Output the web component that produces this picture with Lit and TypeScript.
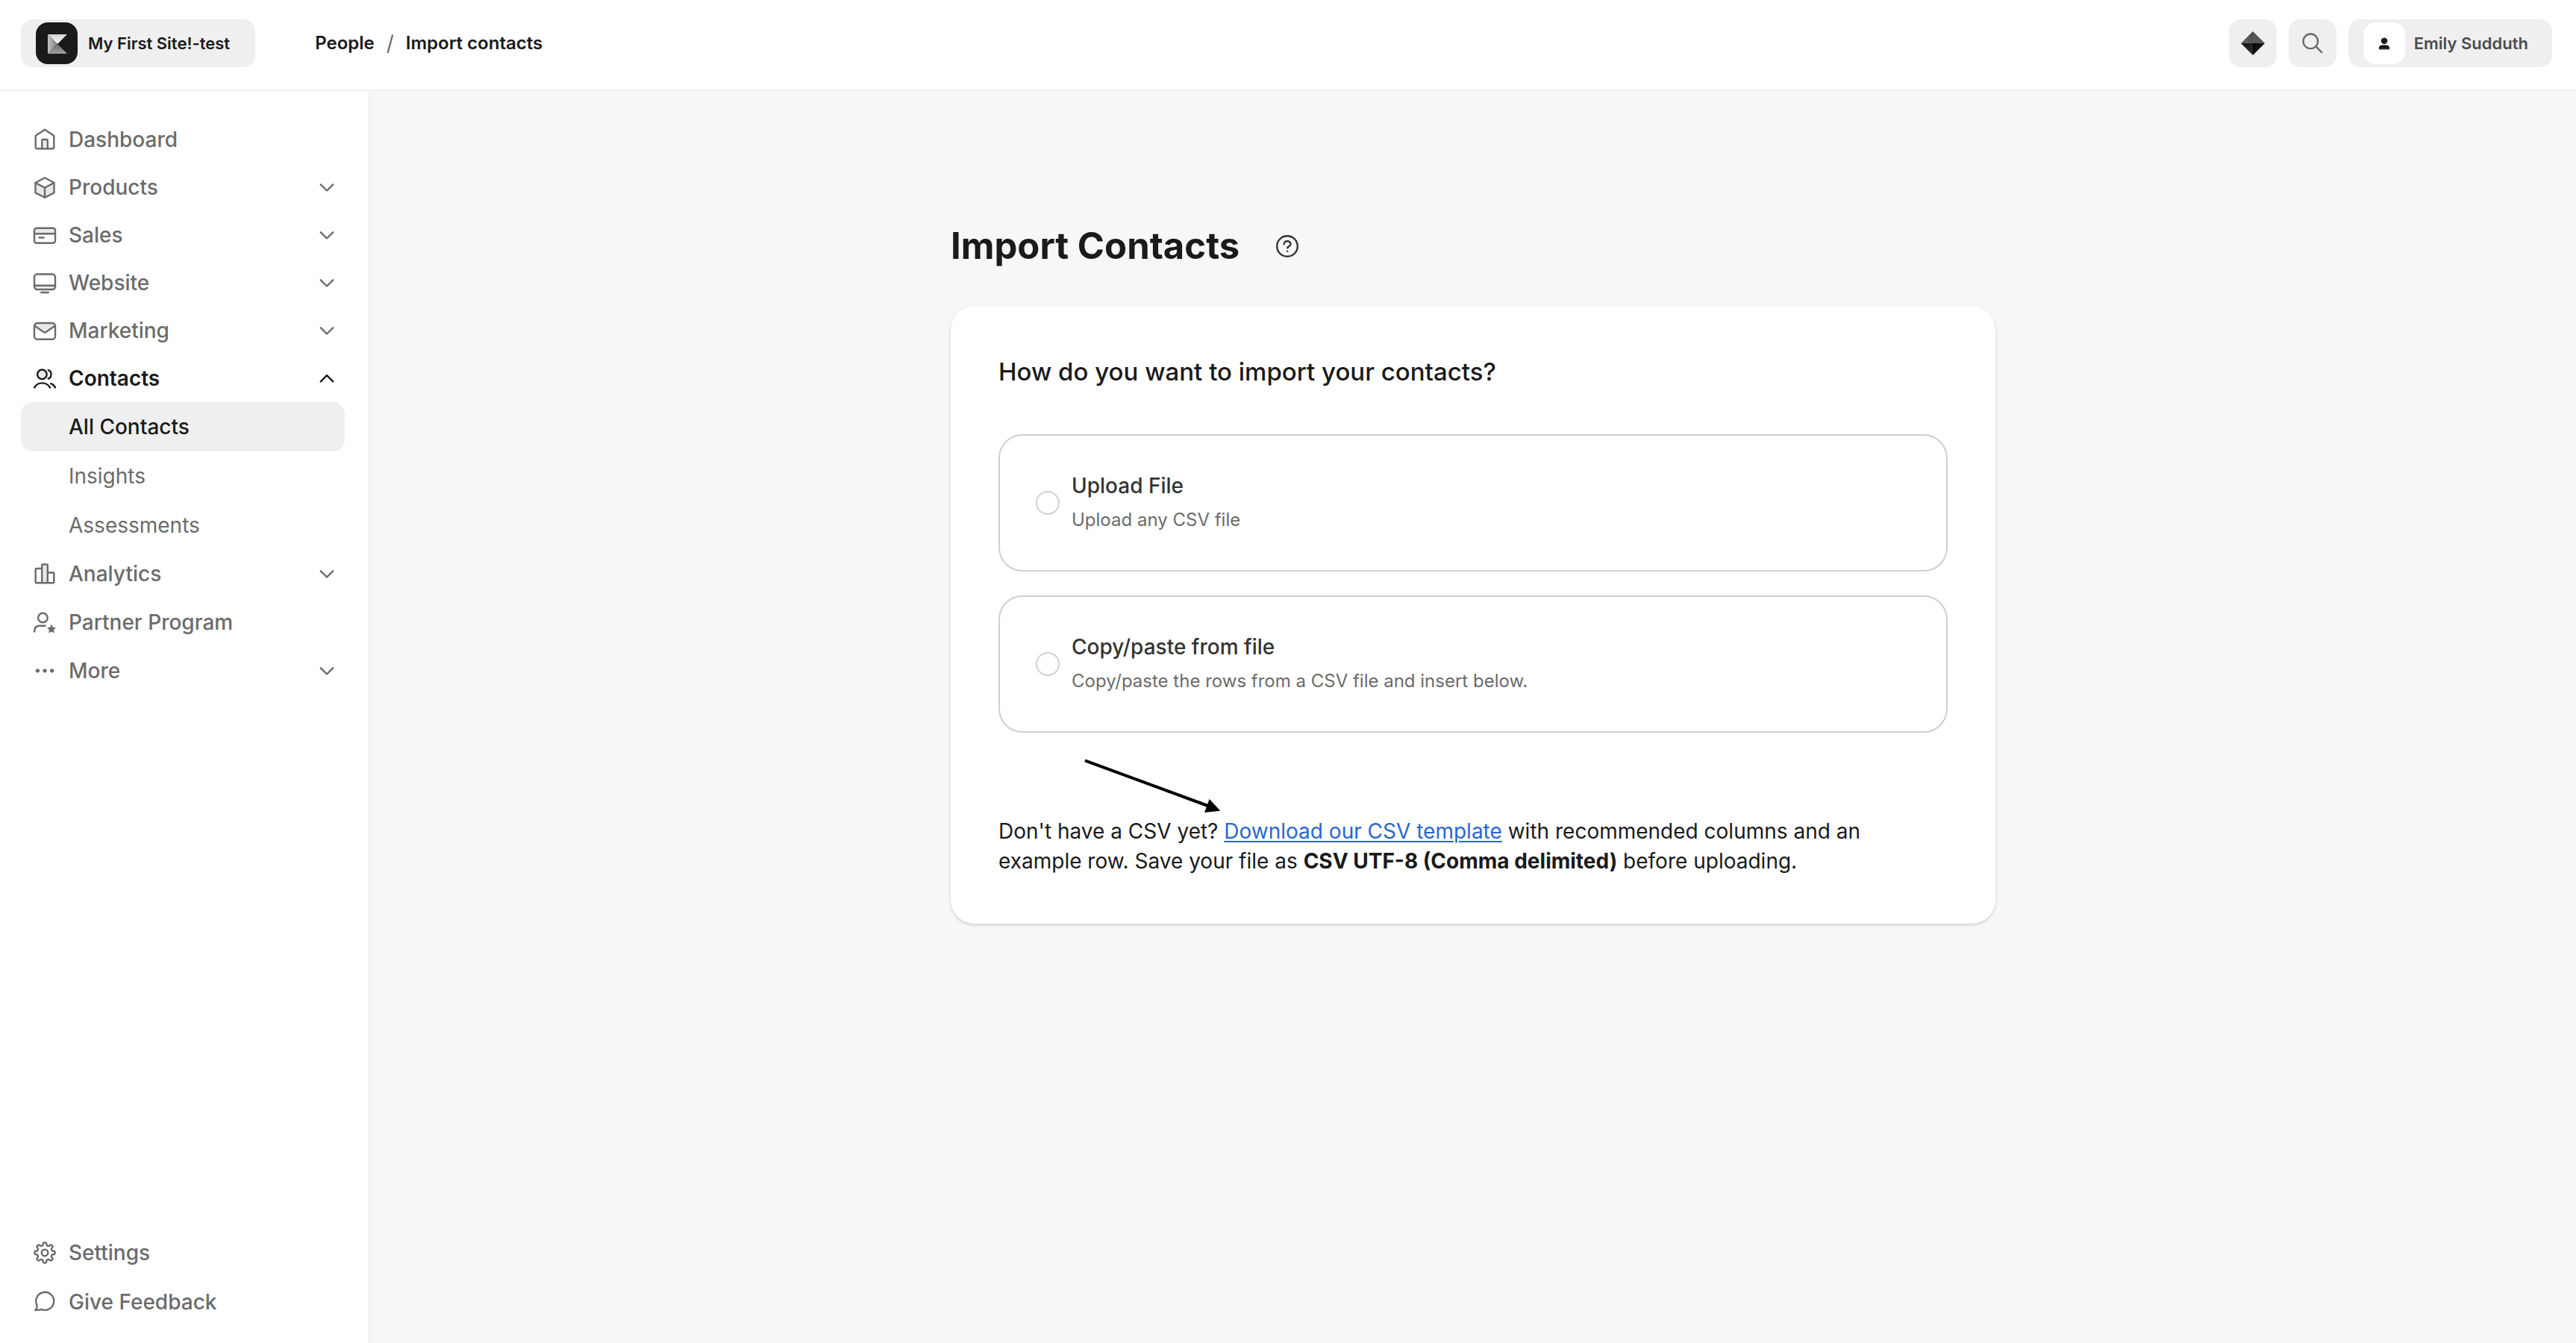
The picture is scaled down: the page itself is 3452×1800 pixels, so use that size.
import { LitElement, html, svg, css, nothing, type TemplateResult, type SVGTemplateResult } from "lit";
import { customElement, property, state } from "lit/decorators.js";
import { classMap } from "lit/directives/class-map.js";

/** Outline of an eight-tooth gear centred in a 32px box. */
function gearPath(): string {
  const steps = 192;
  const points: string[] = [];
  for (let i = 0; i < steps; i++) {
    const angle = (i / steps) * Math.PI * 2;
    const wave = Math.tanh(2 * Math.cos(8 * angle));
    const radius = 11.8 + 1.9 * wave;
    const x = 16 + radius * Math.cos(angle);
    const y = 16 + radius * Math.sin(angle);
    points.push(`${x.toFixed(2)} ${y.toFixed(2)}`);
  }
  return `M${points.join("L")}Z`;
}

const icons: Record<string, SVGTemplateResult> = {
  home: svg`
    <path class="tint" d="M12.2 28.3V17a1 1 0 0 1 1-1h5.6a1 1 0 0 1 1 1v11.3z"/>
    <path d="M16 2.8 27.4 10.3a2 2 0 0 1 .9 1.7v14.3a2 2 0 0 1-2 2H5.700a2 2 0 0 1-2-2V12a2 2 0 0 1 .9-1.7z"/>
    <path d="M12.2 28.3V17a1 1 0 0 1 1-1h5.6a1 1 0 0 1 1 1v11.3"/>`,
  box: svg`
    <path class="tint" d="M3.5 10 16 16.6 28.5 10v13.4L16 29.8 3.5 23.4z"/>
    <path d="M16 3.2 28.5 10v13.4L16 29.8 3.5 23.4V10z"/>
    <path d="M3.5 10 16 16.6 28.5 10M16 16.6v13.2"/>`,
  card: svg`
    <path class="tint" d="M2 14.3V9.7a3 3 0 0 1 3-3h22a3 3 0 0 1 3 3v4.6z"/>
    <rect x="2" y="6.7" width="28" height="20" rx="3"/>
    <path d="M2 14.3h28M8.6 19.5h6"/>`,
  monitor: svg`
    <path class="tint" d="M2 19.7v1.8a3.5 3.5 0 0 0 3.5 3.5h21a3.5 3.5 0 0 0 3.5-3.5v-1.8z"/>
    <rect x="2" y="4.5" width="28" height="20.5" rx="4"/>
    <path d="M2 19.700h28M11.200 29h9.600"/>`,
  mail: svg`
    <path class="tint" d="M3 9.5a4 4 0 0 1 3-3.500h20a4 4 0 0 1 3 3.500L16 18.800z"/>
    <rect x="2" y="6" width="28" height="21.8" rx="4"/>
    <path d="M2.800 10 14.800 18.200a2.200 2.200 0 0 0 2.400 0L29.200 10"/>`,
  people: svg`
    <circle class="tint" cx="12.4" cy="10.8" r="6.3"/>
    <circle cx="12.4" cy="10.8" r="6.3"/>
    <path d="M20.800 5.200c2.200.5 3.700 2.800 3.700 5.600s-1.500 5-3.700 5.700M2.200 28.400c2-3.700 5.800-6 10.200-6s8.400 2.300 10.600 6M24.200 23.200c2.500.9 4.600 2.700 5.800 5.200"/>`,
  chart: svg`
    <path class="tint" d="M12.200 28.300V4.500a1 1 0 0 1 1-1h5.600a1 1 0 0 1 1 1v23.800z"/>
    <path d="M12.200 28.300V4.500a1 1 0 0 1 1-1h5.600a1 1 0 0 1 1 1v23.800M12.200 9H4.700a1 1 0 0 0-1 1v17.300a1 1 0 0 0 1 1h22.600a1 1 0 0 0 1-1V15.500a1 1 0 0 0-1-1h-7.500"/>`,
  partner: svg`
    <circle cx="13.4" cy="10" r="6.3"/>
    <path d="M2.200 28.600v-1c0-4.200 2.600-6.800 7-6.800h7.400"/>
    <path class="solid" d="m25 19.800 1.600 3.300 3.600.5-2.600 2.500.6 3.600-3.200-1.700-3.200 1.700.6-3.600-2.600-2.500 3.600-.5z"/>`,
  dots: svg`
    <circle class="solid" cx="6.4" cy="16" r="2.2"/>
    <circle class="solid" cx="16" cy="16" r="2.2"/>
    <circle class="solid" cx="25.6" cy="16" r="2.2"/>`,
  gear: svg`<path d=${gearPath()}/><circle cx="16" cy="16" r="4.3"/>`,
  chat: svg`<path d="M5.200 19.600A12 12 0 1 1 11.600 25.900C9.300 26.900 6.300 26.700 3.200 27.100c2.300-2.300 2.900-4.300 2-7.500z"/>`,
  search: svg`<circle cx="13.3" cy="13.3" r="9.8"/><path d="m20.400 20.400 7.800 7.800"/>`,
  help: svg`
    <circle cx="16" cy="16" r="13.8"/>
    <path d="M11.600 13.200c0-2.400 1.900-4 4.500-4s4.500 1.600 4.500 3.900c0 2.700-3.300 2.900-4.300 5.200"/>
    <circle class="solid" cx="16" cy="22.700" r=".8"/>`,
  person: svg`
    <circle class="solid" cx="16" cy="12.800" r="3.800"/>
    <path class="solid" d="M9.400 23.500v-1.400a3.400 3.400 0 0 1 3.400-3.200h6.400a3.400 3.400 0 0 1 3.400 3.200v1.400z"/>`,
  down: svg`<path d="m7.800 12.300 8.200 8.200 8.200-8.200"/>`,
  up: svg`<path d="m7.800 20.300 8.200-8.200 8.200 8.200"/>`,
};

@customElement("ui-icon")
class UiIcon extends LitElement {
  static styles = css`
    :host { display: inline-flex; flex: none; }
    svg { width: 32px; height: 32px; fill: none; stroke: currentColor; stroke-width: 2.4; stroke-linecap: round; stroke-linejoin: round; }
    .tint { fill: #e9e9e9; stroke: none; }
    .solid { fill: currentColor; stroke-width: 1; }
  `;
  @property() name = "";
  render() {
    return html`<svg viewBox="0 0 32 32" aria-hidden="true">${icons[this.name] ?? nothing}</svg>`;
  }
}

@customElement("site-logo")
class SiteLogo extends LitElement {
  static styles = css`
    :host { display: inline-flex; flex: none; }
    svg { width: 56px; height: 56px; }
  `;
  render() {
    return html`<svg viewBox="0 0 56 56" aria-hidden="true">
      <defs>
        <linearGradient id="top" x1="0" y1="0" x2="0" y2="1"><stop stop-color="#d0d0d0"/><stop offset="1" stop-color="#fff"/></linearGradient>
        <linearGradient id="left" x1="0" y1="0" x2="1" y2="0"><stop stop-color="#c4c4c4"/><stop offset="1" stop-color="#7c7c7c"/></linearGradient>
        <linearGradient id="bottom" x1="0" y1="0" x2="0" y2="1"><stop stop-color="#6c6c6c"/><stop offset="1" stop-color="#a0a0a0"/></linearGradient>
      </defs>
      <rect width="56" height="56" rx="16" fill="#1a1a1a"/>
      <path d="M16 16h26L29 29z" fill="url(#top)"/>
      <path d="M16 16v26l13-13z" fill="url(#left)"/>
      <path d="M16 42h26L29 29z" fill="url(#bottom)"/>
    </svg>`;
  }
}

@customElement("gem-mark")
class GemMark extends LitElement {
  static styles = css`
    :host { display: inline-flex; flex: none; }
    svg { width: 32px; height: 32px; }
  `;
  render() {
    return html`<svg viewBox="0 0 32 32" aria-hidden="true">
      <defs>
        <linearGradient id="tl" x1="0" y1="1" x2="1" y2="0"><stop stop-color="#666"/><stop offset="1" stop-color="#484848"/></linearGradient>
        <linearGradient id="tr" x1="0" y1="1" x2="1" y2="0"><stop stop-color="#5e5e5e"/><stop offset="1" stop-color="#484848"/></linearGradient>
        <linearGradient id="bl" x1="0" y1="0" x2="1" y2="1"><stop stop-color="#101010"/><stop offset="1" stop-color="#333"/></linearGradient>
        <linearGradient id="br" x1="0" y1="0" x2="1" y2="1"><stop stop-color="#000"/><stop offset="1" stop-color="#2c2c2c"/></linearGradient>
      </defs>
      <path d="M16 0v16H0z" fill="url(#tl)"/>
      <path d="M16 0v16h16z" fill="url(#tr)"/>
      <path d="M0 16h16v16z" fill="url(#bl)"/>
      <path d="M32 16H16v16z" fill="url(#br)"/>
    </svg>`;
  }
}

interface NavItem {
  label: string;
  icon: string;
  expandable?: boolean;
  children?: string[];
}

const mainNav: NavItem[] = [
  { label: "Dashboard", icon: "home" },
  { label: "Products", icon: "box", expandable: true },
  { label: "Sales", icon: "card", expandable: true },
  { label: "Website", icon: "monitor", expandable: true },
  { label: "Marketing", icon: "mail", expandable: true },
  { label: "Contacts", icon: "people", expandable: true, children: ["All Contacts", "Insights", "Assessments"] },
  { label: "Analytics", icon: "chart", expandable: true },
  { label: "Partner Program", icon: "partner" },
  { label: "More", icon: "dots", expandable: true },
];

const footerNav: NavItem[] = [
  { label: "Settings", icon: "gear" },
  { label: "Give Feedback", icon: "chat" },
];

@customElement("side-nav")
class SideNav extends LitElement {
  static styles = css`
    :host {
      box-sizing: border-box;
      display: flex;
      flex-direction: column;
      justify-content: space-between;
      padding: 33px 32px 22px 28px;
      border-right: 2px solid #efefef;
      background: #fff;
    }
    ul { display: flex; flex-direction: column; margin: 0; padding: 0; list-style: none; }
    .row {
      box-sizing: border-box;
      display: flex;
      align-items: center;
      gap: 16px;
      width: 100%;
      height: 64px;
      padding: 0 8px 0 16px;
      border: 0;
      border-radius: 16px;
      background: none;
      color: #6b6b6b;
      font: 500 28px/32px Inter, sans-serif;
      text-align: left;
      text-decoration: none;
      cursor: pointer;
    }
    .row.tall { height: 66px; }
    .row.open { color: #1a1a1a; font-weight: 600; }
    .row.child { padding-left: 64px; font-weight: 400; }
    .row.current { background: #efefef; color: #1a1a1a; font-weight: 500; }
    .label { flex: 1; }
  `;
  @state() private current = "All Contacts";

  private row(item: NavItem, tall: boolean): TemplateResult {
    const open = !!item.children;
    const classes = classMap({ row: true, open, tall });
    return html`<li>
      ${item.expandable
        ? html`<button class=${classes} type="button" aria-expanded=${open ? "true" : "false"}>
            <ui-icon name=${item.icon}></ui-icon><span class="label">${item.label}</span><ui-icon name=${open ? "up" : "down"}></ui-icon>
          </button>`
        : html`<a class=${classes} href="#"><ui-icon name=${item.icon}></ui-icon><span class="label">${item.label}</span></a>`}
      ${item.children
        ? html`<ul>${item.children.map((child) => html`<li>
            <a class=${classMap({ row: true, tall: true, child: true, current: child === this.current })} href="#"
              @click=${() => (this.current = child)}>${child}</a></li>`)}</ul>`
        : nothing}
    </li>`;
  }

  render() {
    return html`
      <ul>${mainNav.map((item) => this.row(item, item.icon === "partner"))}</ul>
      <ul>${footerNav.map((item) => this.row(item, true))}</ul>
    `;
  }
}

@customElement("top-bar")
class TopBar extends LitElement {
  static styles = css`
    :host {
      box-sizing: border-box;
      display: flex;
      align-items: flex-start;
      justify-content: space-between;
      height: 122px;
      padding: 26px 32px 0 28px;
      border-bottom: 2px solid #efefef;
      background: #fff;
      color: #1a1a1a;
      font: 600 24px/32px Inter, sans-serif;
    }
    .start { display: flex; align-items: center; gap: 80px; }
    .actions { display: flex; align-items: center; gap: 16px; }
    button {
      display: flex;
      align-items: center;
      justify-content: center;
      height: 64px;
      padding: 0;
      border: 0;
      border-radius: 16px;
      background: #efefef;
      color: #6b6b6b;
      font: 600 22px/32px Inter, sans-serif;
      cursor: pointer;
    }
    .square { width: 64px; }
    .site { gap: 14px; padding: 0 34px 0 20px; color: #1a1a1a; }
    .user { gap: 12px; padding: 0 32px 0 20px; color: #4d4d4d; }
    .avatar {
      display: flex;
      align-items: center;
      justify-content: center;
      width: 56px;
      height: 56px;
      border-radius: 16px;
      background: #fff;
      color: #1a1a1a;
    }
    ol { display: flex; gap: 16px; margin: 0; padding: 0; list-style: none; }
    a { color: inherit; text-decoration: none; }
    .slash { color: #6b6b6b; font-size: 28px; font-weight: 400; }
  `;
  render() {
    return html`
      <div class="start">
        <button class="site" type="button"><site-logo></site-logo>My First Site!-test</button>
        <nav aria-label="Breadcrumb">
          <ol>
            <li><a href="#">People</a></li>
            <li class="slash" aria-hidden="true">/</li>
            <li aria-current="page">Import contacts</li>
          </ol>
        </nav>
      </div>
      <div class="actions">
        <button class="square" type="button" aria-label="Assistant"><gem-mark></gem-mark></button>
        <button class="square" type="button" aria-label="Search"><ui-icon name="search"></ui-icon></button>
        <button class="user" type="button"><span class="avatar"><ui-icon name="person"></ui-icon></span>Emily Sudduth</button>
      </div>
    `;
  }
}

const options = [
  { id: "upload", title: "Upload File", detail: "Upload any CSV file" },
  { id: "paste", title: "Copy/paste from file", detail: "Copy/paste the rows from a CSV file and insert below." },
];

@customElement("import-form")
class ImportForm extends LitElement {
  static styles = css`
    :host { display: block; color: #1a1a1a; font: 400 28px/40px Inter, sans-serif; }
    .title { display: flex; align-items: center; gap: 48px; margin-bottom: 48px; }
    h1 { margin: 0; font: 700 49px/64px Inter, sans-serif; }
    .help { display: flex; padding: 0; border: 0; background: none; color: #333; cursor: pointer; }
    .card {
      padding: 64px;
      border-radius: 32px;
      background: #fff;
      box-shadow: 0 2px 4px rgba(0, 0, 0, 0.16);
    }
    fieldset { display: flex; flex-direction: column; gap: 32px; margin: 0; padding: 0; border: 0; }
    legend { padding: 0; margin-bottom: 60px; font: 500 33px/48px Inter, sans-serif; }
    .option {
      display: flex;
      align-items: center;
      gap: 16px;
      padding: 44px 48px;
      border: 2px solid #cfcfcf;
      border-radius: 32px;
      cursor: pointer;
    }
    input {
      box-sizing: border-box;
      flex: none;
      appearance: none;
      width: 32px;
      height: 32px;
      margin: 0;
      border: 2px solid #cfcfcf;
      border-radius: 50%;
      background: #fff;
    }
    input:checked { border: 10px solid #1a1a1a; }
    .text { display: flex; flex-direction: column; line-height: 46px; }
    .name { color: #333; font-weight: 500; }
    .detail { color: #6b6b6b; font-size: 24px; }
    .note { position: relative; margin-top: 112px; }
    p { margin: 0; padding-right: 64px; }
    p a { color: #2c66cc; text-decoration-thickness: 2px; text-underline-offset: 3px; }
    strong { font-weight: 700; }
    .arrow { position: absolute; left: 114px; top: -78px; width: 184px; height: 76px; }
  `;
  render() {
    return html`
      <div class="title">
        <h1>Import Contacts</h1>
        <button class="help" type="button" aria-label="Help"><ui-icon name="help"></ui-icon></button>
      </div>
      <section class="card">
        <fieldset>
          <legend>How do you want to import your contacts?</legend>
          ${options.map((o) => html`<label class="option" for=${o.id}>
            <input type="radio" name="method" id=${o.id} .value=${o.id}>
            <span class="text"><span class="name">${o.title}</span><span class="detail">${o.detail}</span></span>
          </label>`)}
        </fieldset>
        <div class="note">
          <p>Don't have a CSV yet? <a href="#">Download our CSV template</a> with recommended columns and an example row. Save your file as <strong>CSV UTF-8 (Comma delimited)</strong> before uploading.</p>
          <svg class="arrow" viewBox="0 0 184 76" aria-hidden="true">
            <path d="M2 3.300 168 64.500" stroke="#000" stroke-width="4"/>
            <path d="m183.300 70.800-21.300 2.200 6.700-18z"/>
          </svg>
        </div>
      </section>
    `;
  }
}

@customElement("app-root")
class AppRoot extends LitElement {
  static styles = css`
    :host { display: grid; grid-template: auto 1fr / 496px minmax(0, 1fr); min-height: 100vh; background: #f7f7f7; }
    top-bar { grid-column: 1 / -1; }
    main { display: flex; justify-content: center; padding: 176px 64px 64px; }
    import-form { flex: 0 1 1400px; }
  `;
  render() {
    return html`
      <top-bar></top-bar>
      <side-nav role="navigation" aria-label="Main"></side-nav>
      <main><import-form></import-form></main>
    `;
  }
}
